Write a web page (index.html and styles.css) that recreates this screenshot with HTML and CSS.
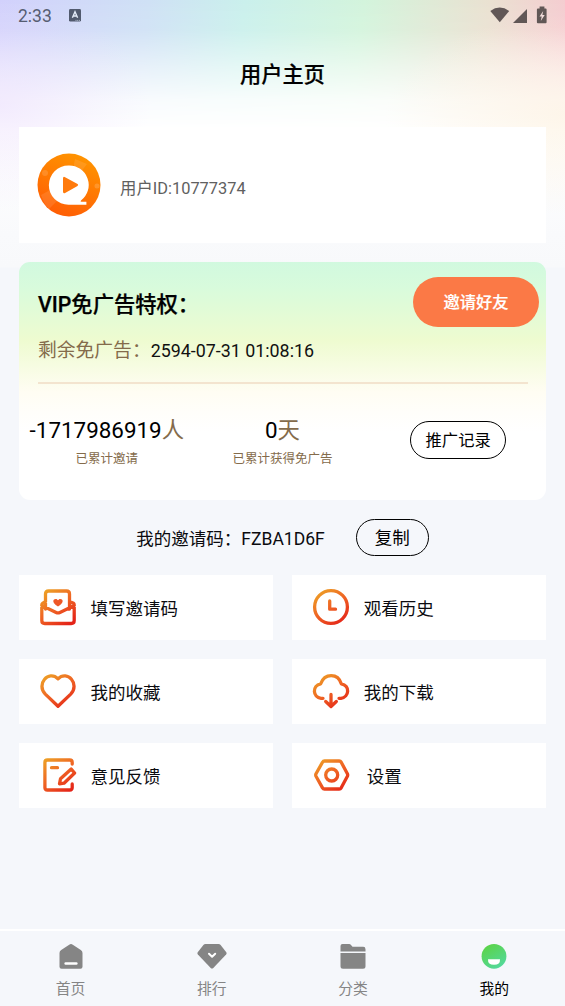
FILE: index.html
```html
<!DOCTYPE html>
<html lang="zh-CN">
<head>
<meta charset="utf-8">
<title>用户主页</title>
<link rel="stylesheet" href="styles.css">
</head>
<body>
<svg class="defs" width="0" height="0" aria-hidden="true">
  <defs>
    <linearGradient id="warm" gradientUnits="userSpaceOnUse" x1="6" y1="2" x2="30" y2="36">
      <stop offset="0" stop-color="#eda226"/><stop offset=".5" stop-color="#ef6424"/><stop offset="1" stop-color="#e42318"/>
    </linearGradient>
    <linearGradient id="logo" x1=".7" y1="0" x2=".3" y2="1">
      <stop offset="0" stop-color="#ff9500"/><stop offset="1" stop-color="#ff5c05"/>
    </linearGradient>
    <linearGradient id="face" x1=".2" y1="0" x2=".8" y2="1">
      <stop offset="0" stop-color="#5bd344"/><stop offset="1" stop-color="#52d9a0"/>
    </linearGradient>
  </defs>
</svg>
<div class="screen">
  <header class="status">
    <span class="time">2:33</span>
    <svg class="lang" width="12" height="13" viewBox="0 0 12 13"><rect width="12" height="12.6" rx="1.4" fill="#515a6e"/><path d="M3.4 8.8 6 2.8l2.6 6M4.3 7h3.4" fill="none" stroke="#e3ebf8" stroke-width="1.4"/><path d="M6.5 11.4h4.8" stroke="#aeb9c9" stroke-width="1" stroke-dasharray="1 .7"/></svg>
    <svg class="signals" width="57" height="18" viewBox="0 0 57 18" fill="#615756">
      <path d="M.3 5Q9.700-1.800 19.200 5L9.800 16.200z"/>
      <path d="M37 3v14H23z"/>
      <path d="M47.900 2.500h1.700V.5h4.800v2h1.200q1 0 1 1v12.700q0 1-1 1h-7.700q-1 0-1-1V3.500q0-1 1-1z"/>
      <path d="M53.200 5 49.500 10.500h2.200L50.800 15l3.900-6h-2.300z" fill="#f1dbd9"/>
    </svg>
  </header>
  <h1 class="title">用户主页</h1>
  <main class="content">
    <section class="profile">
      <svg class="avatar" width="64" height="64" viewBox="0 0 64 64">
        <circle cx="32" cy="32" r="31.500" fill="url(#logo)"/>
        <path d="M38 6 50 11 43 20 36 16zM4 42l9-5 7 11-8 8q-5-5-8-14z" fill="#fff" opacity=".1"/>
        <circle cx="8" cy="20" r="3" fill="#fff" opacity=".14"/><circle cx="60" cy="33" r="2.500" fill="#fff" opacity=".16"/>
        <path d="M31.500 12.500a19.500 19.500 0 0 1 12.500 35q-1.200 1.200.6 1.300h4.800V51.800H31.500a19.650 19.650 0 0 1 0-39.300z" fill="#fff"/>
        <path d="M26 25.500q0-2.400 2.100-1.300l12 6.600q2 1.200 0 2.400l-12 6.700q-2.100 1.100-2.100-1.300z" fill="#ff7a0c"/>
      </svg>
      <span class="uid">用户ID:10777374</span>
    </section>

    <section class="vip">
      <div class="vip-head">
        <h2>VIP免广告特权：</h2>
        <button class="invite">邀请好友</button>
      </div>
      <p class="remain"><span>剩余免广告：</span><b>2594-07-31 01:08:16</b></p>
      <div class="stats">
        <div class="stat"><strong>-1717986919<em>人</em></strong><small>已累计邀请</small></div>
        <div class="stat"><strong>0<em>天</em></strong><small>已累计获得免广告</small></div>
        <div class="record"><button class="outline">推广记录</button></div>
      </div>
    </section>

    <section class="code">
      <span>我的邀请码：FZBA1D6F</span>
      <button class="outline copy">复制</button>
    </section>

    <section class="menu">
      <a class="item"><svg class="icon" viewBox="0 0 38 38"><path d="M6.500 21V6q0-3 3-3h18q3 0 3 3v15M6.500 13.500 3.500 15.300Q2.800 15.700 2.800 17v15.500q0 3 3 3h26.400q3 0 3-3V17q0-1.300-.7-1.700l-4-1.800M2.800 17.500l14.300 7q1.900.9 3.800 0l14.300-7"/><path class="solid" d="M19 18.500c-7-4.500-4.700-7.600-2.300-7.600 1.200 0 1.900.7 2.300 1.400.4-.7 1.100-1.400 2.300-1.400 2.400 0 4.700 3.100-2.300 7.600z"/></svg><span>填写邀请码</span></a>
      <a class="item"><svg class="icon" viewBox="0 0 38 38"><circle cx="19" cy="19" r="16.400"/><path d="M17.700 13v8.200h5.800"/></svg><span>观看历史</span></a>
      <a class="item"><svg class="icon" viewBox="0 0 38 38"><path d="M19 34.300 6.300 22.100C-3.200 12.200 9.600-2.500 19 6.800 28.400-2.500 41.200 12.200 31.700 22.100z"/></svg><span>我的收藏</span></a>
      <a class="item"><svg class="icon" viewBox="0 0 38 38"><path d="M11 26.300H9C.8 25.500-.3 13.500 8.700 11.800 12.500.9 26 .9 29.300 11.800c9 1.700 8 13.300-.3 14.500h-2M19 22.500v12M13.700 29.500l5.300 5 5.300-5"/></svg><span>我的下载</span></a>
      <a class="item"><svg class="icon" viewBox="0 0 38 38"><path d="M33.200 8V6.500q0-2.500-2.500-2.500H8.400q-2.500 0-2.500 2.500v25q0 2.500 2.500 2.500h22.300q2.500 0 2.500-2.500V28M12.500 11.700h6M20.500 27.800l1-5L32.200 13l3.400 4L25 27.200z"/></svg><span>意见反馈</span></a>
      <a class="item"><svg class="icon" viewBox="0 0 38 38"><path d="M12.500 5h14.700q1.300 0 2 1.200l6.200 11.500q.6 1.300 0 2.600l-6.200 11.500q-.7 1.200-2 1.200H12.500q-1.300 0-2-1.200L4 20.300q-.6-1.300 0-2.600l6.500-11.500q.7-1.200 2-1.200z"/><circle cx="19.700" cy="19" r="6"/></svg><span class="nudge">设置</span></a>
    </section>
  </main>
  <nav class="tabs">
    <a><svg width="30" height="30" viewBox="0 0 30 30"><path d="M13.200 2.700q1.800-1.200 3.600 0l8 5.300q1.700 1.200 1.700 3v13.700q0 2-2 2h-19q-2 0-2-2V11q0-1.800 1.700-3z" fill="#858585"/><path d="M9.600 21.500h10.800" stroke="#fff" stroke-width="2.400" stroke-linecap="round"/></svg><span>首页</span></a>
    <a><svg width="30" height="30" viewBox="0 0 30 30"><path d="M8.500 2h13q1.300 0 2.100 1l5.500 7q1 1.300 0 2.400L16.300 26q-1.300 1.200-2.600 0L.9 12.400q-1-1.100 0-2.400l5.500-7q.8-1 2.100-1z" fill="#858585"/><path d="m12 11.700 3.100 3 3.100-3" fill="none" stroke="#fff" stroke-width="2" stroke-linecap="round" stroke-linejoin="round"/></svg><span>排行</span></a>
    <a><svg width="30" height="30" viewBox="0 0 30 30" fill="#858585"><path d="M2.500 9.500V4q0-2 2-2h6.700q1.100 0 1.800 1l1.500 1.800h10.700q2.300 0 2.300 2.400v2.300zM2.500 11h25v13.200q0 2.500-2.500 2.500H5q-2.500 0-2.500-2.500z"/></svg><span>分类</span></a>
    <a class="active"><svg width="30" height="30" viewBox="0 0 30 30"><circle cx="15" cy="14.300" r="12.400" fill="url(#face)"/><path d="M9 17.300h12q.4 5.500-6 5.500t-6-5.500z" fill="#fff"/></svg><span>我的</span></a>
  </nav>
</div>
</body>
</html>
```
FILE: styles.css
```css
* { box-sizing: border-box; }
body { margin: 0; font-family: Roboto, "Noto Sans CJK SC", sans-serif; color: #0b0b0f; }
h1, h2, p { margin: 0; }
button { font: inherit; padding: 0; }
.defs { position: absolute; }
.screen {
  position: relative;
  isolation: isolate;
  height: 1006px;
  overflow: hidden;
  display: flex;
  flex-direction: column;
  background: linear-gradient(#fff 0, #fff 130px, #f9fafc 235px, #f8f9fb 267px, #f5f7fb 268px);
}
.screen::before, .screen::after { content: ""; position: absolute; inset: 0 0 auto; height: 267px; z-index: -1; }
.screen::before {
  background: linear-gradient(97deg, #d2d1fc 0, #cfe1f5 25%, #caf0ec 41%, #d3f4dc 61%, #eae1d1 82%, #f9c4d0 100%);
  -webkit-mask-image: linear-gradient(#000 0, rgba(0,0,0,.92) 30px, rgba(0,0,0,.46) 70px, rgba(0,0,0,.14) 100px, transparent 130px);
  mask-image: linear-gradient(#000 0, rgba(0,0,0,.92) 30px, rgba(0,0,0,.46) 70px, rgba(0,0,0,.14) 100px, transparent 130px);
}
.screen::after {
  background:
    radial-gradient(150px 105px at 0 105px, rgba(236,222,252,.55), rgba(236,222,252,.2) 60%, transparent),
    radial-gradient(180px 100px at 565px 115px, rgba(253,243,226,.7), rgba(253,243,226,.3) 60%, transparent);
}
.status { display: flex; height: 32px; padding: 0 17px 0 18px; color: #565d72; align-items: center; }
.time { font-size: 17.500px; line-height: 32px; }
.lang { margin-left: 17px; margin-top: -1px; }
.signals { margin-left: auto; margin-top: -3px; margin-right: 1px; }
.title { height: 95px; font-size: 21.200px; line-height: 86px; font-weight: 500; text-align: center; color: #000; -webkit-text-stroke: .2px #000; }
.content { padding: 0 19px; flex: 1; }
.profile { height: 116px; background: #fff; display: flex; align-items: center; padding-left: 18px; gap: 19px; }
.uid { font-size: 16.400px; color: #606060; padding-top: 3px; }
.vip { margin-top: 19px; height: 238px; border-radius: 11px; background: linear-gradient(#d1f9df 0, #d8fbdc 25px, #eefbd0 78px, #fffdf3 130px, #fffefa 150px, #fff 170px); }
.vip-head { display: flex; justify-content: space-between; padding: 15px 7px 0 19px; height: 65px; }
.vip h2 { font-size: 21.300px; line-height: 56px; font-weight: 500; color: #000; -webkit-text-stroke: .25px #000; }
.invite { width: 126px; height: 50px; border: 0; border-radius: 25px; background: #fb7946; color: #fff; font-size: 16.300px; font-weight: 500; padding-bottom: 2px; -webkit-text-stroke: .2px #fff; }
.remain { margin: 0 18px 0 19px; height: 57px; border-bottom: 2px solid #f3e4cf; font-size: 18.800px; line-height: 48px; color: #846b4b; white-space: nowrap; }
.remain b { font-size: 17.850px; font-weight: 400; color: #111; }
.stats { display: grid; grid-template-columns: 1fr 1fr 1fr; }
.stat { display: flex; flex-direction: column; align-items: center; padding-top: 31px; }
.stat strong { font-size: 22.400px; font-weight: 400; line-height: 31px; color: #000; white-space: nowrap; }
.stat em { font-style: normal; color: #846b4b; }
.stat small { font-size: 12.500px; line-height: 25px; color: #846b4b; }
.record { display: flex; justify-content: center; padding-top: 37px; }
.outline { width: 96px; height: 38px; border: 1.500px solid #000; border-radius: 19px; background: transparent; color: #000; font-size: 16.300px; padding-bottom: 2px; }
.code { height: 75px; display: flex; justify-content: center; align-items: center; gap: 31px; font-size: 17.500px; padding-bottom: 1px; }
.outline.copy { width: 73px; height: 37px; font-size: 17.500px; }
.menu { display: grid; grid-template-columns: 1fr 1fr; gap: 19px 19.500px; grid-auto-rows: 65px; }
.item { background: #fff; display: flex; align-items: center; padding-left: 19.500px; gap: 14px; font-size: 17.500px; }
.item span { padding-bottom: 1px; }
.icon { width: 38px; height: 38px; margin-top: -1px; fill: none; stroke: url(#warm); stroke-width: 3.300; stroke-linecap: round; stroke-linejoin: round; }
.icon .solid { fill: #ee5726; stroke: none; }
.nudge { padding-left: 3px; }
.tabs { height: 77px; border-top: 2px solid #fff; display: grid; grid-template-columns: repeat(4, 1fr); font-size: 14.800px; color: #858585; }
.tabs a { display: flex; flex-direction: column; align-items: center; padding-top: 11px; }
.tabs svg { width: 30px; height: 30px; }
.tabs span { line-height: 34px; }
.tabs .active { color: #000; }
```
